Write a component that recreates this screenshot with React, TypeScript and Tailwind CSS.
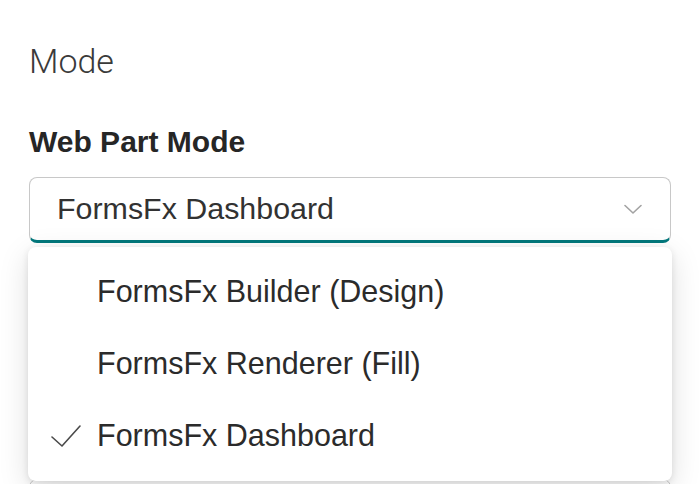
import { useState } from "react";

const options = [
  { key: "design", text: "FormsFx Builder (Design)" },
  { key: "fill", text: "FormsFx Renderer (Fill)" },
  { key: "dashboard", text: "FormsFx Dashboard" },
];

function Chevron() {
  return (
    <svg width="18" height="10" viewBox="0 0 18 10" fill="none" aria-hidden>
      <polyline
        points="1,1.5 9,9 17,1.5"
        stroke="#a3a3a3"
        strokeWidth="1.6"
        strokeLinecap="round"
        strokeLinejoin="round"
      />
    </svg>
  );
}

function Check() {
  return (
    <svg width="30" height="22" viewBox="0 0 30 22" fill="none" aria-hidden>
      <polyline
        points="1,12 11,21 29,1"
        stroke="#4a4a4a"
        strokeWidth="1.6"
        strokeLinecap="round"
        strokeLinejoin="round"
      />
    </svg>
  );
}

export default function App() {
  const [selected, setSelected] = useState("dashboard");
  const current = options.find((o) => o.key === selected);

  return (
    <div className="h-[484px] overflow-hidden bg-white font-['Liberation_Sans',Arial,sans-serif]">
      <div className="px-[29px] pt-[41px]">
        <h2 className="font-['Roboto',sans-serif] text-[34px] font-light leading-[40px] text-[#3a3a3a]">
          Mode
        </h2>
        <label className="mt-[43px] block text-[30px] font-bold leading-[36px] text-[#262626]">
          Web Part Mode
        </label>

        <div className="relative mt-[17px]">
          <button
            type="button"
            className="flex h-[66px] w-full items-center rounded-[8px] border border-b-[3px] border-[#c8c8c8] border-b-[#03787c] pl-[27px] pr-[28px] text-left text-[30.4px] text-[#323232]"
          >
            <span className="flex-1">{current?.text}</span>
            <Chevron />
          </button>

          <div className="absolute left-[-1px] right-[-1px] top-[calc(100%+4px)] z-10 rounded-[8px] bg-white py-[9px] shadow-[0_8px_30px_rgba(0,0,0,0.13),0_2px_7px_rgba(0,0,0,0.1)]">
            {options.map((o) => (
              <div
                key={o.key}
                onClick={() => setSelected(o.key)}
                className="flex h-[72px] cursor-pointer items-center pl-[23px] text-[30.5px] text-[#2b2b2b]"
              >
                <span className="flex w-[46px] items-center">
                  {o.key === selected && <Check />}
                </span>
                <span>{o.text}</span>
              </div>
            ))}
          </div>
        </div>

        <div className="mt-[236px] h-[66px] rounded-[8px] border border-[#c8c8c8]" />
      </div>
    </div>
  );
}
